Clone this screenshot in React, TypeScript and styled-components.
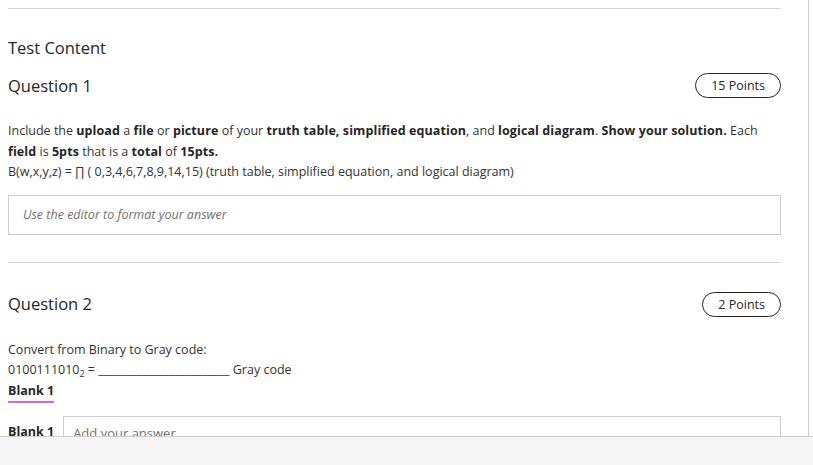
import React from "react";
import styled, { createGlobalStyle } from "styled-components";

const GlobalStyle = createGlobalStyle`
  html, body { margin: 0; padding: 0; background: #ffffff; }
  body {
    font-family: "Open Sans", "Noto Sans", "Liberation Sans", sans-serif;
    color: #262626;
    overflow: hidden;
  }
  * { box-sizing: border-box; }
`;

const Page = styled.div`
  width: 809px;
  min-height: 465px;
  border-right: 1px solid #cdcdcd;
  padding: 8px 27px 40px 8px;
`;

const Rule = styled.div<{ $top?: number }>`
  border-top: 1px solid #d6d6d6;
  margin-top: ${(p) => p.$top ?? 0}px;
`;

const SectionTitle = styled.h2`
  margin: 28px 0 0;
  font-size: 16.5px;
  font-weight: 400;
  line-height: 22px;
  color: #262626;
`;

const QuestionHeader = styled.div<{ $top: number }>`
  display: flex;
  align-items: center;
  justify-content: space-between;
  margin-top: ${(p) => p.$top}px;
`;

const QuestionTitle = styled.h3`
  margin: 0;
  font-size: 16.5px;
  font-weight: 400;
  line-height: 22px;
  color: #262626;
`;

const Badge = styled.span`
  display: inline-flex;
  align-items: center;
  justify-content: center;
  height: 25px;
  padding: 0 15px;
  border: 1px solid #262626;
  border-radius: 13px;
  font-size: 12.5px;
  font-weight: 500;
  color: #262626;
`;

const Body = styled.div<{ $top: number }>`
  margin-top: ${(p) => p.$top}px;
  font-size: 12.5px;
  line-height: 20.5px;
  color: #333333;
`;

const Para = styled.p`
  margin: 0;
  b { font-weight: 700; color: #262626; letter-spacing: 0.1px; }
  sub { font-size: 0.7em; line-height: 0; vertical-align: -0.3em; }
`;

const Editor = styled.div`
  margin-top: 12px;
  height: 40px;
  border: 1px solid #cdcdcd;
  display: flex;
  align-items: center;
  padding: 0 14px;
  font-size: 12.5px;
  font-style: italic;
  color: #6f6f6f;
`;

const BlankLabel = styled.div`
  display: inline-block;
  font-weight: 700;
  color: #262626;
  border-bottom: 2px solid #c86dd7;
  line-height: 19px;
  padding-bottom: 1px;
`;

const AnswerRow = styled.div`
  display: flex;
  align-items: flex-start;
  gap: 9px;
  margin-top: 13px;
`;

const AnswerLabel = styled.span`
  font-weight: 700;
  font-size: 12.5px;
  color: #262626;
  line-height: 20px;
  padding-top: 6px;
`;

const AnswerInput = styled.div`
  flex: 1;
  height: 40px;
  border: 1px solid #cdcdcd;
  padding: 6px 9px;
  font-size: 13px;
  color: #6f6f6f;
`;

const Footer = styled.div`
  position: fixed;
  left: 0;
  right: 0;
  bottom: 0;
  height: 29px;
  background: #f6f6f6;
  border-top: 1px solid #cdcdcd;
`;

export default function App() {
  return (
    <>
      <GlobalStyle />
      <Page>
        <Rule />
        <SectionTitle>Test Content</SectionTitle>
        <QuestionHeader $top={14}>
          <QuestionTitle>Question 1</QuestionTitle>
          <Badge>15 Points</Badge>
        </QuestionHeader>
        <Body $top={23}>
          <Para>
            Include the <b>upload</b> a <b>file</b> or <b>picture</b> of your{" "}
            <b>truth table, simplified equation</b>, and <b>logical diagram</b>.{" "}
            <b>Show your solution.</b> Each <b>field</b> is <b>5pts</b> that is a{" "}
            <b>total</b> of <b>15pts.</b>
          </Para>
          <Para>
            B(w,x,y,z) = ∏ ( 0,3,4,6,7,8,9,14,15) (truth table, simplified equation, and
            logical diagram)
          </Para>
        </Body>
        <Editor>Use the editor to format your answer</Editor>
        <Rule $top={27} />
        <QuestionHeader $top={29}>
          <QuestionTitle>Question 2</QuestionTitle>
          <Badge>2 Points</Badge>
        </QuestionHeader>
        <Body $top={23}>
          <Para>Convert from Binary to Gray code:</Para>
          <Para>
            0100111010<sub>2</sub> = ________________________ Gray code
          </Para>
          <BlankLabel>Blank 1</BlankLabel>
          <AnswerRow>
            <AnswerLabel>Blank 1</AnswerLabel>
            <AnswerInput>Add your answer</AnswerInput>
          </AnswerRow>
        </Body>
      </Page>
      <Footer />
    </>
  );
}
